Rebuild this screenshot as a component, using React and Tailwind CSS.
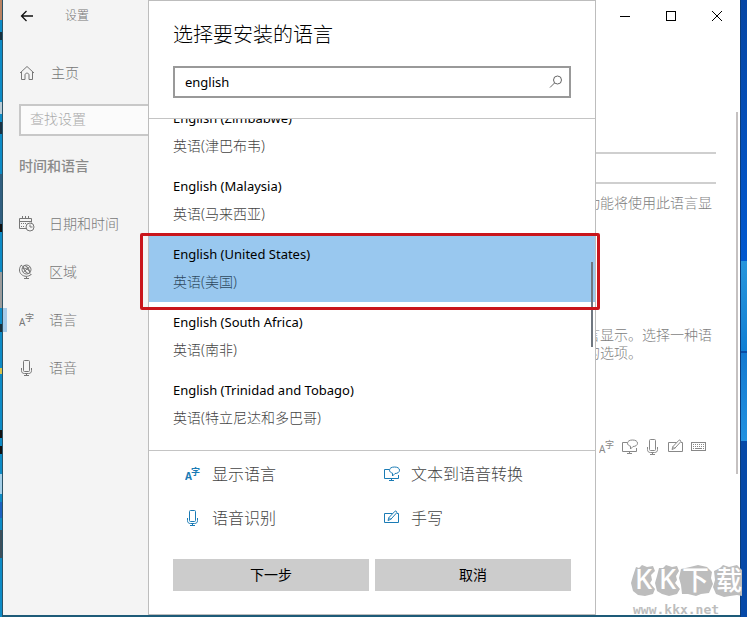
import React from "react";

const languages = [
  { name: "English (Zimbabwe)", local: "英语(津巴布韦)" },
  { name: "English (Malaysia)", local: "英语(马来西亚)" },
  { name: "English (United States)", local: "英语(美国)", selected: true },
  { name: "English (South Africa)", local: "英语(南非)" },
  { name: "English (Trinidad and Tobago)", local: "英语(特立尼达和多巴哥)" },
];

function Icon({ className = "h-4 w-4", children }) {
  return (
    <svg
      viewBox="0 0 16 16"
      className={`shrink-0 ${className}`}
      fill="none"
      stroke="currentColor"
      strokeWidth="1"
      aria-hidden="true"
    >
      {children}
    </svg>
  );
}

function DisplayIcon({ bold, className }) {
  return (
    <Icon className={className}>
      <text x="0" y="14" fontSize="10" fill="currentColor" stroke="none" fontWeight={bold ? 700 : 400}>A</text>
      <text x="6" y="9" fontSize="9" fill="currentColor" stroke="none" fontWeight={bold ? 700 : 400}>字</text>
    </Icon>
  );
}

function SpeechIcon({ className }) {
  return (
    <Icon className={className}>
      <path d="M5 3.500H0.500v9h14V9M7.500 12.500v2M5 14.500h5" />
      <path d="M10.500 1c3 0 5 1.200 5 3.200s-2 3.300-4.500 3.300L8.500 10V7.200C6.600 6.600 5.500 5.600 5.500 4.200c0-2 2-3.200 5-3.200z" />
    </Icon>
  );
}

function MicIcon({ className }) {
  return (
    <Icon className={className}>
      <rect x="4.500" y="0.500" width="6" height="11" rx="1" />
      <path d="M2.500 8v2.500c0 2 1 3 3 3h4c2 0 3-1 3-3V8M7.500 13.500v2M5 15.500h5" />
    </Icon>
  );
}

function PenIcon({ className }) {
  return (
    <Icon className={className}>
      <path d="M8.500 3.500H0.500v9h14v-9h-1.500" />
      <path d="M4 10.500l1-3L11 1.200c.8-.7 2.400.7 1.700 1.600L6.800 9.300zM5 7.500l1.800 1.800" />
    </Icon>
  );
}

function KeyboardIcon({ className }) {
  return (
    <Icon className={className}>
      <rect x="0.500" y="3.500" width="14" height="8" />
      <path d="M2 5.500h11M2 7.500h11" strokeDasharray="1 1" />
      <path d="M2 9.500h1M4 9.500h7M12 9.500h1" />
    </Icon>
  );
}

function HomeIcon({ className }) {
  return (
    <Icon className={className}>
      <path d="M1 8L8 1.500 15 8M2.500 7v7.500h3.500v-4.500c0-2.500 4-2.500 4 0v4.500h3.500V7" />
    </Icon>
  );
}

function CalendarIcon({ className }) {
  return (
    <Icon className={className}>
      <path d="M7 12.500H0.500v-10h12v4M0.500 5.500h12M3.500 0v3M6.500 0v3M9.500 0v3" />
      <path d="M2 7.500h6M2 10.500h4" strokeDasharray="1 1" />
      <circle cx="11" cy="11" r="4" />
      <path d="M11 8.500V11h2.500" />
    </Icon>
  );
}

function GlobeIcon({ className }) {
  return (
    <Icon className={className}>
      <circle cx="7.500" cy="5.500" r="4.500" />
      <ellipse cx="7.500" cy="5.500" rx="2" ry="4.500" transform="rotate(-35 7.500 5.500)" />
      <path d="M3.500 4.500c3-1 6 1 7.500 4M4 8.500l7-6" />
      <path d="M2.500 1C-.3 4-.2 8 2.500 10.500c2.600 2.400 7 2.500 9.500 0M2 1l1.800 1.500M12.500 11l-1.500-1.500M7.500 12.500v2M5 14.500h5" />
    </Icon>
  );
}

const navItems = [
  { label: "日期和时间", icon: CalendarIcon },
  { label: "区域", icon: GlobeIcon },
  { label: "语言", icon: DisplayIcon, active: true },
  { label: "语音", icon: MicIcon },
];

const features = [
  { label: "显示语言", icon: <DisplayIcon bold className="h-4 w-4" /> },
  { label: "文本到语音转换", icon: <SpeechIcon /> },
  { label: "语音识别", icon: <MicIcon /> },
  { label: "手写", icon: <PenIcon /> },
];

function Sidebar() {
  return (
    <aside className="w-[145px] shrink-0 bg-[#f4f4f4] text-sm font-light text-[#777]">
      <header className="flex h-8 items-center pl-4">
        <button type="button" aria-label="返回" className="text-[#111]">
          <Icon>
            <path d="M14 8H2.500M7.500 3L2.500 8l5 5" strokeWidth="1.300" />
          </Icon>
        </button>
        <span className="ml-[30px] text-xs">设置</span>
      </header>
      <a href="#home" className="mt-[17px] flex h-12 items-center gap-4 pl-4">
        <HomeIcon />
        主页
      </a>
      <div className="mt-[7px] pl-4">
        <input
          type="text"
          aria-label="查找设置"
          placeholder="查找设置"
          className="block h-8 w-full border-2 border-r-0 border-[#c8c8c8] bg-[#fbfbfb] pb-1 pl-[9px] outline-none placeholder:text-[#aaa]"
        />
      </div>
      <h2 className="mt-[6px] flex h-12 items-center pl-4 font-medium text-[#8a8a8a]">时间和语言</h2>
      <nav className="mt-[10px]">
        {navItems.map(({ label, icon: NavIcon, active }) => (
          <a key={label} href="#section" className="relative flex h-12 items-center gap-[14px] pl-4">
            {active && <span className="absolute top-3 left-0 h-6 w-1 bg-[#a6cbea]" />}
            <NavIcon className="h-4 w-4" />
            {label}
          </a>
        ))}
      </nav>
    </aside>
  );
}

function Content() {
  return (
    <main className="relative w-[154px] shrink-0 text-sm leading-[18px] font-light text-[#808080]">
      <div className="flex h-8 justify-end text-black">
        <button type="button" aria-label="最小化" className="flex w-[46px] items-center justify-center">
          <Icon><path d="M3 8.500h10" /></Icon>
        </button>
        <button type="button" aria-label="最大化" className="flex w-[46px] items-center justify-center">
          <Icon><rect x="3.500" y="3.500" width="9" height="9" /></Icon>
        </button>
        <button type="button" aria-label="关闭" className="flex w-[46px] items-center justify-center">
          <Icon><path d="M3 3l10 10M13 3L3 13" /></Icon>
        </button>
      </div>
      <div className="mt-[120px] mr-6 h-8 border-y-2 border-[#cfcfcf]" />
      <p className="mt-[10px] whitespace-nowrap">功能将使用此语言显</p>
      <p className="mt-[114px] whitespace-nowrap">
        言显示。选择一种语
        <br />
        的选项。
      </p>
      <div className="mt-[77px] flex gap-[7px] pl-[13px] text-[#888]">
        <DisplayIcon className="h-4 w-4" />
        <SpeechIcon className="h-4 w-4" />
        <MicIcon className="h-4 w-4" />
        <PenIcon className="h-4 w-4" />
        <KeyboardIcon className="h-4 w-4" />
      </div>
      <div className="absolute top-28 right-[2px] h-[362px] w-[2px] bg-[#c5c1c1]" />
    </main>
  );
}

function LanguageDialog() {
  return (
    <section
      role="dialog"
      aria-label="选择要安装的语言"
      className="absolute inset-y-0 right-[144px] left-[145px] flex flex-col border border-[#bdbdbd] bg-white"
    >
      <div className="border-b border-[#c4c4c4] px-6 pt-[18px] pb-5">
        <h1 className="text-xl leading-8 font-light text-black">选择要安装的语言</h1>
        <div className="relative mt-[15px]">
          <input
            type="text"
            aria-label="搜索语言"
            defaultValue="english"
            className="block h-8 w-full border-2 border-[#999] bg-white pr-8 pb-px pl-[10px] text-[13px] text-black outline-none"
          />
          <Icon className="absolute top-2 right-[7px] h-4 w-4 text-[#666]">
            <circle cx="9.500" cy="6" r="4" />
            <path d="M6.500 9L2 13.500" />
          </Icon>
        </div>
      </div>
      <div className="relative h-[331px] overflow-hidden">
        <ul className="-mt-[21px]">
          {languages.map((language) => (
            <li
              key={language.name}
              className={`px-6 py-[6px] text-sm leading-7 ${language.selected ? "bg-[#99c8ef]" : ""}`}
            >
              <div className="text-[13px] leading-7 text-black">{language.name}</div>
              <div className={`font-light ${language.selected ? "text-[#2f4a60]" : "text-[#444]"}`}>
                {language.local}
              </div>
            </li>
          ))}
        </ul>
        <div className="absolute top-[143px] right-[2px] h-[85px] w-[2px] bg-[#6f7780]" />
      </div>
      <div className="border-t border-[#c4c4c4] px-6 pt-px">
        <ul className="grid grid-cols-2 text-base font-light text-[#444]">
          {features.map((feature) => (
            <li key={feature.label} className="flex h-11 items-center gap-[11px] pl-3">
              <span className="text-[#1a7bb5]">{feature.icon}</span>
              {feature.label}
            </li>
          ))}
        </ul>
        <div className="mt-[19px] grid grid-cols-2 gap-[6px] text-sm text-black">
          <button type="button" className="h-8 bg-[#ccc]">下一步</button>
          <button type="button" className="h-8 bg-[#ccc]">取消</button>
        </div>
      </div>
      <div className="pointer-events-none absolute top-[232px] -right-[5px] -left-[9px] h-[77px] rounded-[2px] border-[3px] border-[#c9151b]" />
    </section>
  );
}

function Watermark() {
  return (
    <div className="pointer-events-none absolute right-0 bottom-0 w-[116px]">
      <svg viewBox="0 0 116 54" className="block w-full" role="img" aria-label="KK下载">
        <g fill="#bdbdbd">
          <path d="M5 4l3 1 3-3 5 2 6-1 2 5-4 4 1 5-2 3 5 6-2 5-8 2-7-1-5-4-2-8 2-7z" />
          <path d="M28 5l4 0 3-3 6 2 5-1 2 5-3 5 1 4-2 3 5 6-3 5-8 2-7-2-5-3-2-8 2-7z" />
          <path d="M50 6l9-2 8-2 9 2 5 5-1 6 2 6-4 9-8 1-5 2-8-2-6 0-1-9-2-7z" />
          <path d="M83 8l6-3 3-3 6 2 8-2 5 5v26l-5-1-7 1-6 1-8-3-3-7 2-7z" />
        </g>
        <g fill="#fff" fontWeight="500">
          <text x="4" y="26" fontSize="27">K</text>
          <text x="28" y="26" fontSize="27">K</text>
          <text x="51" y="27" fontSize="27">下</text>
          <text x="85" y="27" fontSize="26">载</text>
        </g>
        <text x="2" y="51" fontSize="13" fontWeight="700" fill="#bdbdbd" className="font-['DejaVu_Sans_Mono',monospace]">
          www.kkx.net
        </text>
      </svg>
    </div>
  );
}

export default function App() {
  return (
    <div className="relative flex min-h-screen overflow-hidden bg-[#1d5b78] font-['Noto_Sans','Noto_Sans_CJK_SC',sans-serif]">
      <div className="flex w-[3px] shrink-0 flex-col border-r border-[#2b5265] bg-[#0d8bc6]">
        <div className="h-5 bg-[#b98262]" />
        <div className="mt-3 h-2 bg-[#16303f]" />
        <div className="mt-[62px] h-3 bg-[#b9cbd6]" />
        <div className="mt-2 h-3 bg-[#1b3344]" />
        <div className="mt-10 h-[50px] bg-[#315f80]" />
        <div className="h-2 bg-[#111]" />
        <div className="mt-10 h-9 bg-[#9c9c9c]" />
        <div className="mt-4 h-2 bg-[#16303f]" />
        <div className="mt-9 h-[6px] bg-[#d8c24a]" />
        <div className="mt-14 h-2 bg-[#111]" />
        <div className="mt-2 h-2 bg-[#111]" />
        <div className="mt-5 h-5 bg-[#a5cfe8]" />
        <div className="mt-2 h-4 bg-[#1c62c0]" />
        <div className="mt-3 h-7 bg-[#3d4f5b]" />
      </div>
      <div className="relative mb-[2px] flex min-w-0 flex-1 bg-white">
        <Sidebar />
        <div className="flex-1" />
        <Content />
        <LanguageDialog />
      </div>
      <div className="flex w-[7px] shrink-0 flex-col border-l border-[#0b3d7c] bg-[#0649a8]">
        <div className="h-[261px] bg-linear-to-b from-[#0646a4] to-[#0058d0]" />
        <div className="h-[90px] bg-linear-to-b from-[#2795dc] to-[#0f7fd4]" />
        <div className="h-[2px] bg-[#0a4da6]" />
        <div className="h-[88px] bg-linear-to-b from-[#1379d0] to-[#2291e0]" />
      </div>
      <Watermark />
    </div>
  );
}
